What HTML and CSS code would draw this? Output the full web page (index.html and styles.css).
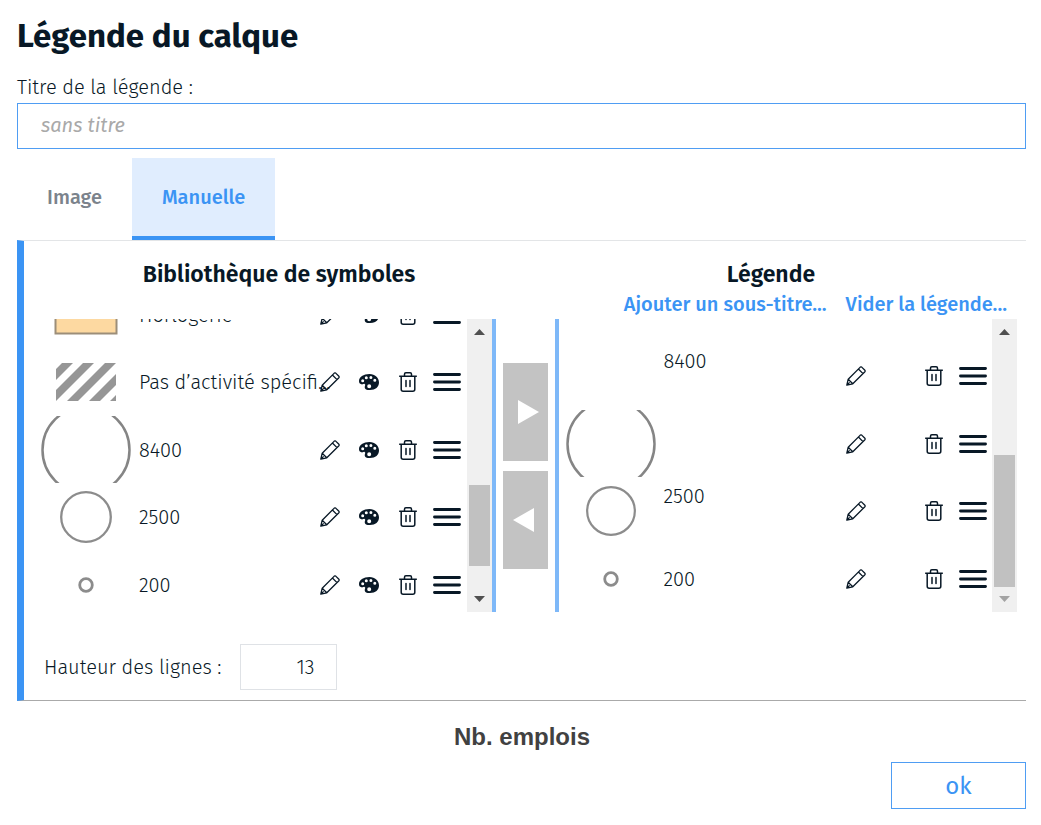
FILE: index.html
```html
<!DOCTYPE html>
<html lang="fr">
<head>
<meta charset="utf-8">
<meta name="viewport" content="width=device-width, initial-scale=1">
<title>Légende du calque</title>
<link rel="stylesheet" href="styles.css">
</head>
<body>
<svg class="sprite" aria-hidden="true">
  <symbol id="pencil" viewBox="0 0 20 20">
    <path d="M.8 19.2 2.2 13.2 14.3 1.1Q15 .5 15.7 1.1L18.9 4.3Q19.5 5 18.9 5.7L6.8 17.8ZM2.2 13.2 6.8 17.8M12.4 3 17 7.6M.8 19.2 3.6 16.4" fill="none" stroke="currentColor" stroke-width="1.3" stroke-linejoin="round"/>
  </symbol>
  <symbol id="palette" viewBox="0 0 20 16">
    <path fill-rule="evenodd" fill="currentColor" d="M10.5 0C16 0 20 3.7 20 8.5 20 13 16.500 16 11 16 7.500 16 5.700 15.200 5.700 13.200 5.700 11.500 7 10.600 5.600 9.900 4.700 9.500 3.800 10.700 2.400 10.300.7 9.900 0 8.700 0 7 0 3 4.500 0 10.500 0ZM3.700 5.200a1.500 1.500 0 1 0 0 3 1.500 1.500 0 0 0 0-3ZM7.300 2.300a1.500 1.500 0 1 0 0 3 1.500 1.500 0 0 0 0-3ZM11.900 2a1.500 1.500 0 1 0 0 3 1.500 1.500 0 0 0 0-3ZM15.800 4.800a1.500 1.500 0 1 0 0 3 1.500 1.500 0 0 0 0-3ZM10.200 10.200a2 2 0 1 0 0 4 2 2 0 0 0 0-4Z"/>
  </symbol>
  <symbol id="trash" viewBox="0 0 18 20">
    <path d="M.7 4.200H17.300M5.500 4V2.200Q5.500.8 6.900.8H11.100Q12.500.8 12.500 2.200V4M2.200 4.300V17.200Q2.200 19.200 4.200 19.200H13.800Q15.800 19.200 15.800 17.200V4.300M7 8.500V14.500M11 8.500V14.500" fill="none" stroke="currentColor" stroke-width="1.5" stroke-linecap="round"/>
  </symbol>
  <symbol id="bars" viewBox="0 0 28 20">
    <path d="M1.500 2.500H26.500M1.500 10H26.500M1.500 17.500H26.500" stroke="currentColor" stroke-width="2.900" stroke-linecap="round"/>
  </symbol>
  <symbol id="circle-xl" viewBox="0 0 90 90"><circle cx="45" cy="45" r="43.500" fill="none" stroke="#858585" stroke-width="2.500"/></symbol>
  <symbol id="circle-m" viewBox="0 0 52 52"><circle cx="26" cy="26" r="24.800" fill="none" stroke="#8c8c8c" stroke-width="2.300"/></symbol>
  <symbol id="circle-s" viewBox="0 0 16 16"><circle cx="8" cy="8" r="6.300" fill="none" stroke="#8c8c8c" stroke-width="2.800"/></symbol>
</svg>
<main class="dialog">
  <h1 class="title">Légende du calque</h1>
  <label class="field-label" for="legend-title">Titre de la légende :</label>
  <input class="title-input" id="legend-title" type="text" placeholder="sans titre">

  <nav class="tabs" role="tablist">
    <button class="tab" type="button" role="tab" aria-selected="false">Image</button>
    <button class="tab tab-active" type="button" role="tab" aria-selected="true">Manuelle</button>
  </nav>

  <section class="panel">
    <header class="heads">
      <h2 class="head">Bibliothèque de symboles</h2>
      <div>
        <h2 class="head">Légende</h2>
        <div class="links"><a href="#sous-titre">Ajouter un sous-titre...</a><a href="#vider">Vider la légende...</a></div>
      </div>
    </header>

    <div class="lists">
      <div class="list list-library">
        <ul class="rows rows-scrolled">
          <li class="row">
            <span class="swatch"><svg width="64" height="40" viewBox="0 0 64 40"><rect x="1.500" y="1.500" width="61" height="37" fill="#fdd9a1" stroke="#9c8e79" stroke-width="2"/></svg></span>
            <span class="label">Horlogerie</span>
            <span class="actions">
              <button class="icon" type="button" aria-label="Modifier"><svg width="20" height="20"><use href="#pencil"/></svg></button>
              <button class="icon" type="button" aria-label="Couleur"><svg width="20" height="16"><use href="#palette"/></svg></button>
              <button class="icon" type="button" aria-label="Supprimer"><svg width="18" height="20"><use href="#trash"/></svg></button>
              <button class="icon" type="button" aria-label="Déplacer"><svg width="28" height="20"><use href="#bars"/></svg></button>
            </span>
          </li>
          <li class="row">
            <span class="swatch"><svg width="60" height="38" viewBox="0 0 60 38"><path d="M0 6 6 0H17L0 17ZM0 27 27 0H38L0 38ZM11 38 49 0H60L22 38ZM33 38 60 11V22L44 38ZM54 38 60 32V38Z" fill="#969696"/></svg></span>
            <span class="label">Pas d’activité spécifi...</span>
            <span class="actions">
              <button class="icon" type="button" aria-label="Modifier"><svg width="20" height="20"><use href="#pencil"/></svg></button>
              <button class="icon" type="button" aria-label="Couleur"><svg width="20" height="16"><use href="#palette"/></svg></button>
              <button class="icon" type="button" aria-label="Supprimer"><svg width="18" height="20"><use href="#trash"/></svg></button>
              <button class="icon" type="button" aria-label="Déplacer"><svg width="28" height="20"><use href="#bars"/></svg></button>
            </span>
          </li>
          <li class="row">
            <span class="swatch"><svg width="90" height="90"><use href="#circle-xl"/></svg></span>
            <span class="label">8400</span>
            <span class="actions">
              <button class="icon" type="button" aria-label="Modifier"><svg width="20" height="20"><use href="#pencil"/></svg></button>
              <button class="icon" type="button" aria-label="Couleur"><svg width="20" height="16"><use href="#palette"/></svg></button>
              <button class="icon" type="button" aria-label="Supprimer"><svg width="18" height="20"><use href="#trash"/></svg></button>
              <button class="icon" type="button" aria-label="Déplacer"><svg width="28" height="20"><use href="#bars"/></svg></button>
            </span>
          </li>
          <li class="row">
            <span class="swatch"><svg width="52" height="52"><use href="#circle-m"/></svg></span>
            <span class="label">2500</span>
            <span class="actions">
              <button class="icon" type="button" aria-label="Modifier"><svg width="20" height="20"><use href="#pencil"/></svg></button>
              <button class="icon" type="button" aria-label="Couleur"><svg width="20" height="16"><use href="#palette"/></svg></button>
              <button class="icon" type="button" aria-label="Supprimer"><svg width="18" height="20"><use href="#trash"/></svg></button>
              <button class="icon" type="button" aria-label="Déplacer"><svg width="28" height="20"><use href="#bars"/></svg></button>
            </span>
          </li>
          <li class="row">
            <span class="swatch"><svg width="16" height="16"><use href="#circle-s"/></svg></span>
            <span class="label">200</span>
            <span class="actions">
              <button class="icon" type="button" aria-label="Modifier"><svg width="20" height="20"><use href="#pencil"/></svg></button>
              <button class="icon" type="button" aria-label="Couleur"><svg width="20" height="16"><use href="#palette"/></svg></button>
              <button class="icon" type="button" aria-label="Supprimer"><svg width="18" height="20"><use href="#trash"/></svg></button>
              <button class="icon" type="button" aria-label="Déplacer"><svg width="28" height="20"><use href="#bars"/></svg></button>
            </span>
          </li>
        </ul>
        <div class="scrollbar" aria-hidden="true">
          <svg width="25" height="25"><path d="M7 16H18L12.500 10Z" fill="#505050"/></svg>
          <div class="track"><div class="track-space"></div><div class="thumb thumb-library"></div><div class="track-rest"></div></div>
          <svg width="25" height="25"><path d="M7 9H18L12.500 15Z" fill="#505050"/></svg>
        </div>
      </div>

      <div class="transfer">
        <button class="move" type="button" aria-label="Ajouter à la légende"><svg width="45" height="24"><path d="M15 0V24L36 12Z" fill="#fff"/></svg></button>
        <button class="move" type="button" aria-label="Retirer de la légende"><svg width="45" height="24"><path d="M31 0V24L10 12Z" fill="#fff"/></svg></button>
      </div>

      <div class="list list-legend">
        <ul class="rows rows-end">
          <li class="row">
            <span class="swatch"></span>
            <span class="label label-raised">8400</span>
            <span class="actions">
              <button class="icon" type="button" aria-label="Modifier"><svg width="20" height="20"><use href="#pencil"/></svg></button>
              <span class="icon"></span>
              <button class="icon" type="button" aria-label="Supprimer"><svg width="18" height="20"><use href="#trash"/></svg></button>
              <button class="icon" type="button" aria-label="Déplacer"><svg width="28" height="20"><use href="#bars"/></svg></button>
            </span>
          </li>
          <li class="row">
            <span class="swatch"><svg width="90" height="90"><use href="#circle-xl"/></svg></span>
            <span class="label"></span>
            <span class="actions">
              <button class="icon" type="button" aria-label="Modifier"><svg width="20" height="20"><use href="#pencil"/></svg></button>
              <span class="icon"></span>
              <button class="icon" type="button" aria-label="Supprimer"><svg width="18" height="20"><use href="#trash"/></svg></button>
              <button class="icon" type="button" aria-label="Déplacer"><svg width="28" height="20"><use href="#bars"/></svg></button>
            </span>
          </li>
          <li class="row">
            <span class="swatch"><svg width="50" height="50"><use href="#circle-m"/></svg></span>
            <span class="label label-raised">2500</span>
            <span class="actions">
              <button class="icon" type="button" aria-label="Modifier"><svg width="20" height="20"><use href="#pencil"/></svg></button>
              <span class="icon"></span>
              <button class="icon" type="button" aria-label="Supprimer"><svg width="18" height="20"><use href="#trash"/></svg></button>
              <button class="icon" type="button" aria-label="Déplacer"><svg width="28" height="20"><use href="#bars"/></svg></button>
            </span>
          </li>
          <li class="row">
            <span class="swatch"><svg width="16" height="16"><use href="#circle-s"/></svg></span>
            <span class="label">200</span>
            <span class="actions">
              <button class="icon" type="button" aria-label="Modifier"><svg width="20" height="20"><use href="#pencil"/></svg></button>
              <span class="icon"></span>
              <button class="icon" type="button" aria-label="Supprimer"><svg width="18" height="20"><use href="#trash"/></svg></button>
              <button class="icon" type="button" aria-label="Déplacer"><svg width="28" height="20"><use href="#bars"/></svg></button>
            </span>
          </li>
        </ul>
        <div class="scrollbar" aria-hidden="true">
          <svg width="25" height="25"><path d="M7 16H18L12.500 10Z" fill="#505050"/></svg>
          <div class="track"><div class="track-space"></div><div class="thumb thumb-legend"></div></div>
          <svg width="25" height="25"><path d="M7 9H18L12.500 15Z" fill="#a3a3a3"/></svg>
        </div>
      </div>
    </div>

    <div class="height-row">
      <label for="row-height">Hauteur des lignes :</label>
      <input class="height-input" id="row-height" type="text" inputmode="numeric" value="13">
    </div>
  </section>

  <p class="caption">Nb. emplois</p>
  <div class="footer"><button class="ok" type="button">ok</button></div>
</main>
</body>
</html>
```
FILE: styles.css
```css
* { box-sizing: border-box; }
body {
  margin: 0;
  background: #fff;
  color: #081826;
  font: 300 20px/24px "Fira Sans", "Noto Sans", sans-serif;
}
button, input { font: inherit; color: inherit; border-radius: 0; }
button { padding: 0; border: 0; background: none; cursor: pointer; }
svg { display: block; flex: none; }
.sprite { position: absolute; width: 0; height: 0; }

.dialog { padding: 14px 15px 16px 17px; }
.title { margin: 0; font-size: 33px; line-height: 44px; font-weight: 700; }
.field-label { display: block; margin-top: 15px; line-height: 28px; }
.title-input {
  display: block;
  width: 100%;
  height: 46px;
  margin-top: 2px;
  padding: 0 23px 2px;
  border: 1px solid #4f9df3;
  background: #fff;
}
.title-input::placeholder { color: #a9a9a9; font-style: italic; font-weight: 400; opacity: 1; }

.tabs { display: flex; margin-top: 9px; }
.tab { height: 82px; padding: 0 30px; font-weight: 500; color: #7b838c; border-bottom: 4px solid transparent; }
.tab-active { color: #3b94f4; background: #e0edfe; border-bottom-color: #3b94f4; }

.panel { border: solid #e3e5e7; border-width: 1px 0 0; border-left: 7px solid #3b94f4; border-bottom: 1px solid #aaa; padding: 19px 9px 10px; }
.heads { display: grid; grid-template-columns: 1fr 1fr; }
.head { margin: 0; font-size: 23px; line-height: 28px; font-weight: 600; text-align: center; }
.links { display: flex; justify-content: flex-end; gap: 19px; padding: 4px 10px 3px 0; font-weight: 500; }
.links a { color: #3b94f4; text-decoration: none; white-space: nowrap; }

.lists { display: grid; grid-template-columns: 1fr 59px 1fr; height: 293px; }
.list { display: flex; overflow: hidden; min-width: 0; }
.list-library { padding-left: 8px; border-right: 4px solid #7eb8f8; }
.list-legend { padding-left: 7px; border-left: 4px solid #7eb8f8; }
.rows { flex: 1; min-width: 0; margin: 0; padding: 0; list-style: none; }
.rows-scrolled { margin-top: -38px; }
.rows-end { padding-top: 23px; }
.row { display: flex; align-items: center; height: 67px; }
.rows-scrolled .row:nth-child(even), .rows-end .row:nth-child(odd) { height: 68px; }
.swatch { flex: none; display: flex; align-items: center; justify-content: center; width: 90px; height: 67px; overflow: hidden; }
.label { flex: 1; min-width: 0; margin-left: 8px; white-space: nowrap; }
.label-raised { padding-bottom: 30px; }
.actions { display: flex; }
.icon { display: flex; align-items: center; justify-content: center; width: 39px; height: 39px; }

.scrollbar { flex: none; display: flex; flex-direction: column; width: 25px; background: #f0f0f0; }
.track { flex: 1; display: flex; flex-direction: column; padding: 0 2px; }
.track-space { flex: 1; }
.track-rest { height: 21px; }
.thumb { background: #c1c1c1; }
.thumb-library { height: 81px; }
.thumb-legend { height: 132px; }

.transfer { display: flex; flex-direction: column; align-items: center; justify-content: center; gap: 10px; }
.move { display: flex; align-items: center; width: 45px; height: 98px; background: #c3c3c3; }

.height-row { display: flex; align-items: center; gap: 19px; margin-top: 32px; padding-left: 11px; }
.height-input { width: 97px; height: 46px; padding: 0 22px; border: 1px solid #dfe2e6; text-align: right; background: #fff; }

.caption { margin: 20px 0 0; padding-left: 1px; text-align: center; font: bold 24px/32px "Liberation Sans", Arial, sans-serif; color: #414141; }
.footer { display: flex; justify-content: flex-end; margin-top: 9px; }
.ok { width: 135px; height: 47px; border: 1px solid #4f9df3; color: #3b94f4; font-size: 24px; font-weight: 400; }
```
